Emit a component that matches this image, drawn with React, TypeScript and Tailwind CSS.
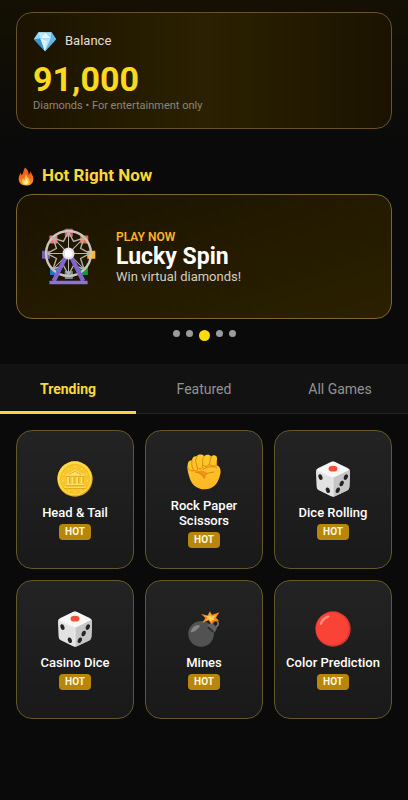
import { useState, type ReactNode } from "react";

function Diamond() {
  return (
    <svg viewBox="0 0 72 64" className="h-[21px] w-6" aria-hidden="true">
      <path d="M16 4h40l14 21-34 37L2 25z" fill="#58b5e6" />
      <path d="M16 4 2 25l20-2z" fill="#93d6f6" />
      <path d="M16 4h22L22 23z" fill="#bfe8fa" />
      <path d="M38 4 22 23h32z" fill="#e6f7ff" />
      <path d="M38 4h18l-2 19z" fill="#a5dcf7" />
      <path d="m56 4 14 21-16-2z" fill="#5fb9e8" />
      <path d="m2 25 20-2 14 39z" fill="#3396d3" />
      <path d="M22 23h32L36 62z" fill="#b5e2f8" />
      <path d="m22 23 20 8-6 31z" fill="#d9f3ff" />
      <path d="m54 23 16 2-34 37z" fill="#63b7e5" />
    </svg>
  );
}

function Flame() {
  return (
    <svg viewBox="0 0 48 56" className="h-[19px] w-4" aria-hidden="true">
      <defs>
        <linearGradient id="flame" x1="0" y1="0" x2="0" y2="1">
          <stop offset="0" stopColor="#ee5a20" />
          <stop offset=".55" stopColor="#f8681e" />
          <stop offset="1" stopColor="#ffa62b" />
        </linearGradient>
      </defs>
      <path d="M22 1c6 5 10 12 10 22 3-2 4-6 4-10 7 8 10 16 10 23 0 12-9 19-22 19S2 48 2 35c0-8 4-13 6-19 1 3 1 6 3 8C18 17 15 8 22 1z" fill="url(#flame)" />
      <path d="M24 21c1 8 10 12 11 20 1 7-4 12-11 12s-12-4-12-11c0-4 2-7 4-9 0 3 1 5 3 6 2-6 0-11 5-18z" fill="#ffc93c" />
      <path d="M25 34c1 5 5 7 5 12 0 4-3 6-6 6-4 0-7-2-7-6 0-2 1-4 2-5 1 2 2 2 3 2 1-3 0-6 3-9z" fill="#fff0a2" />
    </svg>
  );
}

const cabins = [
  { x: 71, y: 2, color: "#d9536f" },
  { x: 25, y: 22, color: "#ef6f7c" },
  { x: 117, y: 22, color: "#ee673c" },
  { x: 3, y: 68, color: "#7561b8" },
  { x: 138, y: 68, color: "#ffb43d" },
  { x: 27, y: 116, color: "#1878d2" },
  { x: 116, y: 116, color: "#1d9145" },
  { x: 71, y: 128, color: "#78909c" },
];

function FerrisWheel() {
  return (
    <svg viewBox="0 0 164 170" className="h-[57px] w-[55px]" aria-hidden="true">
      {cabins.map((c) => (
        <rect key={`${c.x}-${c.y}`} x={c.x} y={c.y} width="24" height="24" rx="2" fill={c.color} />
      ))}
      <g fill="none" stroke="#b9b4ad">
        <circle cx="82" cy="76" r="67" strokeWidth="7" stroke="#cbc6c0" />
        <path d="M82 9v134M15 76h134M35 29l94 94M129 29l-94 94" strokeWidth="3" />
        <path d="M82 12 97 40 128 30 118 61 146 76 118 91 128 122 97 112 82 140 67 112 36 122 46 91 18 76 46 61 36 30 67 40z" strokeWidth="4" />
      </g>
      <path d="M77 80 38 158M87 80l39 78" stroke="#8065cf" strokeWidth="13" />
      <path d="M25 157h114v11H25z" fill="#8b72df" />
      <circle cx="82" cy="76" r="18" fill="#e2e0e7" />
      <circle cx="82" cy="76" r="11" fill="#fff" />
    </svg>
  );
}

function Coin() {
  return (
    <svg viewBox="0 0 108 108" className="size-9" aria-hidden="true">
      <circle cx="54" cy="54" r="53" fill="#e9a91d" />
      <circle cx="53" cy="52" r="51" fill="#ffda45" />
      <circle cx="54" cy="54" r="44" fill="#f8c62a" stroke="#eab320" strokeWidth="2" />
      <path d="M25 42 54 26l29 16v4H25zM31 48h6v20h-6zM44 48h6v20h-6zM58 48h6v20h-6zM71 48h6v20h-6zM27 69h54v4H27zM22 77h64v4H22z" fill="#ffe26a" />
      <path d="M25 46h58M38 49v18M51 49v18M65 49v18M78 49v18M27 74h54M22 82h64M34 41l20-10 20 10" fill="none" stroke="#cf9518" strokeWidth="2" />
      <g fill="#ffe780">
        <circle cx="54" cy="17" r="2" /><circle cx="34" cy="23" r="2" /><circle cx="74" cy="23" r="2" />
        <circle cx="19" cy="39" r="2" /><circle cx="89" cy="39" r="2" /><circle cx="17" cy="60" r="2" />
        <circle cx="91" cy="60" r="2" /><circle cx="36" cy="90" r="2" /><circle cx="54" cy="94" r="2" /><circle cx="72" cy="90" r="2" />
      </g>
    </svg>
  );
}

function Fist() {
  return (
    <svg viewBox="0 0 104 108" className="size-9" aria-hidden="true">
      <defs>
        <linearGradient id="skin" x1="0" y1="0" x2="0" y2="1">
          <stop offset="0" stopColor="#ffca28" />
          <stop offset="1" stopColor="#ffb626" />
        </linearGradient>
      </defs>
      <path d="M3 33c0-9 5-14 13-14 1-9 6-13 14-12 3-6 18-8 23 0 5-6 17-6 20 1 8-8 18-4 18 5v21c10 4 13 15 9 30-6 26-21 42-45 42-28 0-43-18-48-41C3 52 1 42 3 33z" fill="url(#skin)" />
      <path d="M27 53c9-3 20-4 29 0l9 5c-6 1-11 6-12 16-7-10-16-17-26-21z" fill="#f59317" />
      <g fill="none" stroke="#dd841b" strokeWidth="3" strokeLinecap="round" strokeLinejoin="round">
        <path d="M16 20c-3 12 1 22 6 30 7 3 12-1 10-8L28 25c-2-6-1-13 4-17" />
        <path d="M34 42c4 6 14 3 14-4V20c0-5 1-10 5-12M48 34c4 5 17 4 20-3M68 31l5-22M68 31c4 6 17 7 22 3V21" />
        <path d="M4 41c3 9 9 11 18 9M27 55c11-1 21 6 26 18 1-11 7-16 18-17l11-2M49 46c10-8 30-11 41-5" />
      </g>
    </svg>
  );
}

function Die() {
  return (
    <svg viewBox="0 0 108 112" className="size-9" aria-hidden="true">
      <path d="M48 3q6-3 12 0l40 19q7 4 7 12l-2 46q0 8-7 12l-38 18q-6 3-12 0L10 91q-7-4-7-12L1 34q0-8 7-12z" fill="#e2e2e2" />
      <path d="m54 49 51-21 2 8-2 44q0 8-7 12l-38 18-6 2z" fill="#c6c6c6" />
      <path d="M3 27 48 3q6-3 12 0l45 24-45 23q-6 3-12 0z" fill="#f7f7f7" />
      <path d="M3 29 54 52v58" fill="none" stroke="#eee" strokeWidth="3" />
      <ellipse cx="54" cy="24" rx="14" ry="9" fill="#ef5335" />
      <g fill="#242424">
        <ellipse cx="15" cy="50" rx="6" ry="9" transform="rotate(-20 15 50)" />
        <ellipse cx="38" cy="91" rx="6" ry="9" transform="rotate(-20 38 91)" />
        <ellipse cx="94" cy="50" rx="6" ry="9" transform="rotate(24 94 50)" />
        <ellipse cx="81" cy="70" rx="6" ry="9" transform="rotate(24 81 70)" />
        <ellipse cx="69" cy="91" rx="6" ry="9" transform="rotate(24 69 91)" />
      </g>
    </svg>
  );
}

function Bomb() {
  return (
    <svg viewBox="0 0 108 112" className="size-9" aria-hidden="true">
      <path d="M80 42c0-14 17-16 18-4 1 7-3 10-8 12" fill="none" stroke="#887366" strokeWidth="5" />
      <circle cx="45" cy="71" r="40" fill="#525252" />
      <path d="m63 44 16-7 16 15-8 15z" fill="#626262" />
      <path d="m66 50 17 15" stroke="#292929" strokeWidth="5" />
      <path d="M14 61c5-14 17-21 28-16-3 9-17 19-26 22-3 0-4-3-2-6z" fill="#858585" />
      <path d="m72 1 7 11 23-8-11 17 10 9-16 1-8 10-9-12-19 8 9-15-13-13 20 5z" fill="#f28b26" />
      <path d="m73 9 3 9 16-5-9 10 5 4-9 1-3 6-6-8-10 3 6-8-7-6 11 1z" fill="#ffd54f" />
    </svg>
  );
}

function RedBall() {
  return (
    <svg viewBox="0 0 112 112" className="size-9" aria-hidden="true">
      <circle cx="56" cy="56" r="55" fill="#d93631" />
      <circle cx="54" cy="55" r="51" fill="#f94336" />
      <path d="M15 40c2-12 13-23 25-26 7-1 7 4 2 7-11 5-16 10-20 19-3 5-8 5-7 0z" fill="#ff8a7c" />
    </svg>
  );
}

const games: { name: string; icon: ReactNode }[] = [
  { name: "Head & Tail", icon: <Coin /> },
  { name: "Rock Paper Scissors", icon: <Fist /> },
  { name: "Dice Rolling", icon: <Die /> },
  { name: "Casino Dice", icon: <Die /> },
  { name: "Mines", icon: <Bomb /> },
  { name: "Color Prediction", icon: <RedBall /> },
];

const tabs = ["Trending", "Featured", "All Games"];

export default function App() {
  const [tab, setTab] = useState("Trending");
  const [slide, setSlide] = useState(2);

  return (
    <div className="min-h-screen bg-[#0a0a0a] font-[Roboto,sans-serif] text-white">
      <header className="bg-linear-to-b from-[#141002] to-[#0a0a0a] px-4 pt-3 pb-4">
        <section className="rounded-2xl border border-[#665327] bg-linear-to-r from-[#1b1300] via-[#2b2100] to-[#1b1300] px-4 pt-4 pb-[14px]">
          <div className="flex h-6 items-center gap-2">
            <Diamond />
            <h2 className="text-[13px] text-[#e2ded6]">Balance</h2>
          </div>
          <p className="mt-2 text-[34px] leading-9 font-bold text-[#fad91f]">91,000</p>
          <p className="text-[11px] leading-[17px] text-[#8d867b]">Diamonds • For entertainment only</p>
        </section>
      </header>

      <main>
        <section className="px-4 pt-[19px]">
          <h2 className="flex h-6 items-center gap-2 pl-[2px] text-[17px] font-bold text-[#fad936]">
            <Flame />
            Hot Right Now
          </h2>
          <button
            type="button"
            className="mt-[6px] flex h-[125px] w-full items-center gap-5 rounded-2xl border border-[#7a672b] bg-linear-to-br from-[#1b1300] to-[#2b2100] px-6 text-left"
          >
            <FerrisWheel />
            <span className="flex flex-col">
              <span className="text-xs leading-4 font-semibold text-[#ffb32d]">PLAY NOW</span>
              <span className="text-[23px] leading-6 font-bold">Lucky Spin</span>
              <span className="text-[13px] leading-4 text-[#d2cec5]">Win virtual diamonds!</span>
            </span>
          </button>
          <div className="mt-[11px] flex h-[11px] items-start justify-center gap-[6px]">
            {[0, 1, 2, 3, 4].map((i) => (
              <button
                key={i}
                type="button"
                aria-label={`Slide ${i + 1}`}
                onClick={() => setSlide(i)}
                className={i === slide ? "size-[11px] rounded-full bg-[#fcda0b]" : "size-[7px] rounded-full bg-[#9b9b9b]"}
              />
            ))}
          </div>
        </section>

        <nav className="mt-[23px] grid h-[50px] grid-cols-3 border-b border-[#242424] bg-[#121212]" role="tablist">
          {tabs.map((t) => (
            <button
              key={t}
              type="button"
              role="tab"
              aria-selected={t === tab}
              onClick={() => setTab(t)}
              className={
                t === tab
                  ? "-mb-px border-b-3 border-[#f6d640] pt-[3px] text-sm font-bold text-[#fad936]"
                  : "-mb-px border-b-3 border-transparent pt-[3px] text-sm text-[#929292]"
              }
            >
              {t}
            </button>
          ))}
        </nav>

        <section className="grid grid-cols-3 gap-[11px] px-4 pt-4 pb-4" aria-label={tab}>
          {games.map((g) => (
            <button
              key={g.name}
              type="button"
              className="flex h-[139px] flex-col items-center justify-center rounded-2xl border border-[#635827] bg-linear-to-b from-[#232323] to-[#191919] px-2 pt-[2px]"
            >
              {g.icon}
              <span className="mt-2 text-[13px] leading-[15px] font-medium">{g.name}</span>
              <span className="mt-1 rounded-[4px] bg-[#b8860b] px-[6px] text-[10px] leading-4 font-bold text-[#fff8df]">HOT</span>
            </button>
          ))}
        </section>
      </main>
    </div>
  );
}
